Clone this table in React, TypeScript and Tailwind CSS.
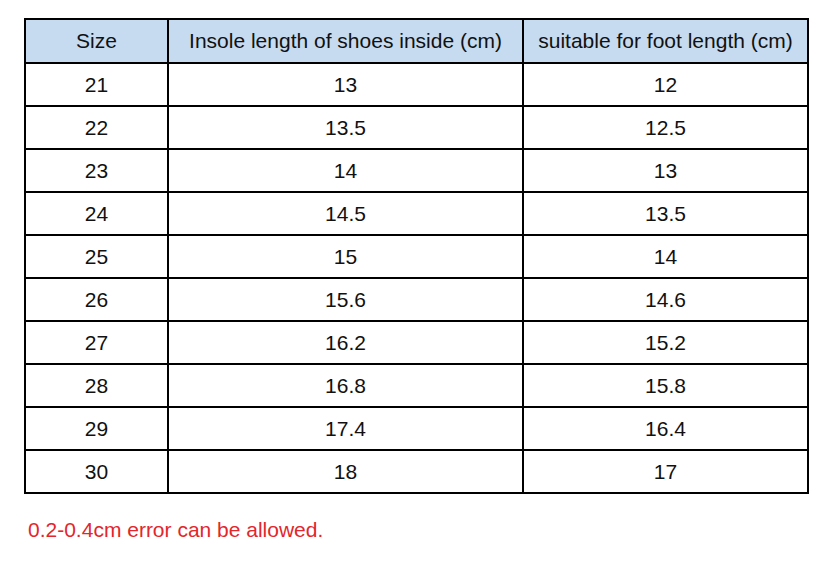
const rows: [string, string, string][] = [
  ["21", "13", "12"],
  ["22", "13.5", "12.5"],
  ["23", "14", "13"],
  ["24", "14.5", "13.5"],
  ["25", "15", "14"],
  ["26", "15.6", "14.6"],
  ["27", "16.2", "15.2"],
  ["28", "16.8", "15.8"],
  ["29", "17.4", "16.4"],
  ["30", "18", "17"],
];

export default function App() {
  return (
    <div className="w-[832px] h-[572px] bg-white font-['Liberation_Sans',Arial,sans-serif] text-[#111]">
      <div className="pt-[18px] pl-[24px]">
        <table className="border-collapse border-2 border-black text-[21px]">
          <thead>
            <tr className="bg-[#c6dbf0] h-[44px]">
              <th className="w-[143px] border-2 border-black font-normal text-center">Size</th>
              <th className="w-[355px] border-2 border-black font-normal text-center">
                Insole length of shoes inside (cm)
              </th>
              <th className="w-[285px] border-2 border-black font-normal text-center">
                suitable for foot length (cm)
              </th>
            </tr>
          </thead>
          <tbody>
            {rows.map((r) => (
              <tr key={r[0]} className="h-[43px]">
                <td className="border-2 border-black text-center">{r[0]}</td>
                <td className="border-2 border-black text-center">{r[1]}</td>
                <td className="border-2 border-black text-center">{r[2]}</td>
              </tr>
            ))}
          </tbody>
        </table>
      </div>
      <p className="mt-[20px] ml-[28px] text-[21px] text-[#e3262c]">0.2-0.4cm error can be allowed.</p>
    </div>
  );
}
